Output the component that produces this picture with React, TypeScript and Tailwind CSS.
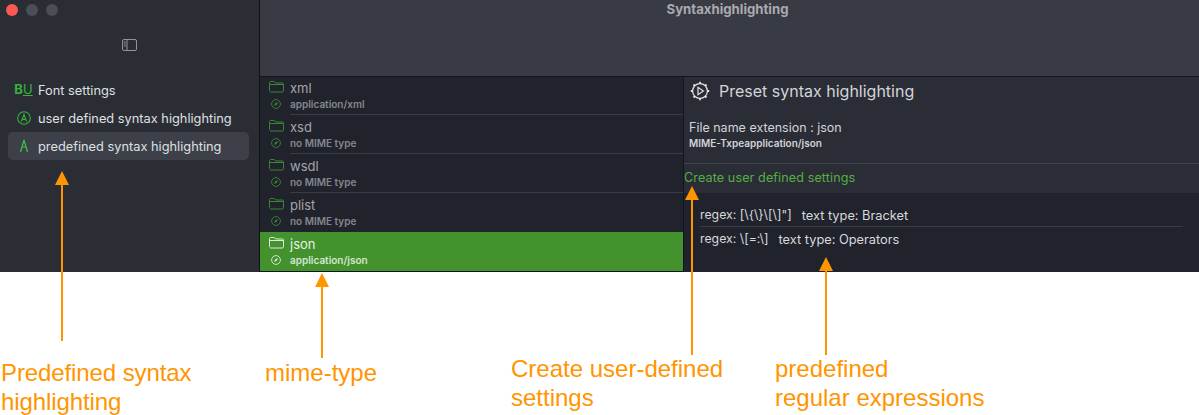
const sans = { fontFamily: 'Inter, sans-serif' };
const helvetica = { fontFamily: '"Liberation Sans", sans-serif' };

function FolderIcon({ className }: { className: string }) {
  return (
    <svg viewBox="0 0 15 12" className={className} fill="none" stroke="currentColor" strokeWidth="1">
      <path d="M.5 2V1.6C.5 1 1 .5 1.6.5h3.2c.5 0 .8.2 1.1.5l.9 1h6.6c.6 0 1.1.5 1.1 1.1v6.8c0 .6-.5 1.1-1.1 1.1H1.6C1 10.5.5 10 .5 9.4V2ZM.5 3.5h14" />
    </svg>
  );
}

function CompassIcon({ className }: { className: string }) {
  return (
    <svg viewBox="0 0 10 10" className={className} fill="none" stroke="currentColor" strokeWidth="0.9">
      <circle cx="5" cy="5" r="4.4" />
      <path d="M7 3 5.8 5.8 3 7 4.2 4.2Z" fill="currentColor" stroke="none" />
    </svg>
  );
}

function GearPlayIcon() {
  return (
    <svg viewBox="0 0 20 20" className="h-[20px] w-[20px] text-[#e4e5e8]" fill="none" stroke="currentColor" strokeWidth="1.2">
      <circle cx="10" cy="10" r="7.4" />
      <path d="M10 .8v2M10 17.2v2M.8 10h2M17.2 10h2M3.5 3.5l1.4 1.4M15.1 15.1l1.4 1.4M3.5 16.5l1.4-1.4M15.1 4.9l1.4-1.4" strokeWidth="1.8" />
      <path d="M8 6.3v7.4l5.4-3.7Z" />
    </svg>
  );
}

function SidebarToggleIcon() {
  return (
    <svg viewBox="0 0 15 12" className="h-[12px] w-[15px] text-[#92949a]" fill="none" stroke="currentColor" strokeWidth="1">
      <rect x=".5" y=".5" width="14" height="11" rx="1.5" />
      <path d="M5 .5v11" />
      <path d="M1.8 3h2M1.8 5h2M1.8 7h2" />
    </svg>
  );
}

function SidebarItem({ icon, label, selected }: { icon: React.ReactNode; label: string; selected?: boolean }) {
  return (
    <div className={`flex h-[28px] items-center rounded-[5px] ${selected ? 'bg-[#3d4049]' : ''}`}>
      <div className="flex w-[30px] shrink-0 justify-center pl-[1px]">{icon}</div>
      <span className="pt-[2px] text-[12.8px] text-[#dfe0e3]" style={sans}>{label}</span>
    </div>
  );
}

const files = [
  { name: 'xml', mime: 'application/xml' },
  { name: 'xsd', mime: 'no MIME type' },
  { name: 'wsdl', mime: 'no MIME type' },
  { name: 'plist', mime: 'no MIME type' },
  { name: 'json', mime: 'application/json', selected: true },
];

function FileRow({ name, mime, selected, last, first }: { name: string; mime: string; selected?: boolean; last?: boolean; first?: boolean }) {
  return (
    <div className={`relative ${first ? 'h-[38px]' : 'h-[39px]'} ${selected ? 'bg-[#43922e]' : ''}`}>
      <div className={`flex h-[22px] items-center ${first ? '-mt-[1px]' : ''}`}>
        <FolderIcon className={`ml-[9px] h-[12px] w-[15px] ${selected ? 'text-[#dcebd6]' : 'text-[#3d8434]'}`} />
        <span className={`ml-[6px] pt-[4px] text-[13px] ${selected ? 'text-[#e8f0e4]' : 'text-[#a3a5aa]'}`} style={sans}>{name}</span>
      </div>
      <div className="flex h-[12px] items-center">
        <CompassIcon className={`ml-[11px] h-[10px] w-[10px] ${selected ? 'text-[#dcebd6]' : 'text-[#3d8434]'}`} />
        <span className={`ml-[9px] text-[10px] font-semibold ${selected ? 'text-[#d5e6cf]' : 'text-[#85878d]'}`} style={sans}>{mime}</span>
      </div>
      {!selected && !last && <div className="absolute bottom-0 left-[30px] right-0 h-px bg-[#3a3c44]" />}
    </div>
  );
}

function Arrow({ x, top, bottom }: { x: string; top: string; bottom: string }) {
  return (
    <div className={`absolute flex flex-col items-center ${x} ${top} ${bottom}`}>
      <div className="h-0 w-0 border-x-[7px] border-b-[14px] border-x-transparent border-b-[#ff9500]" />
      <div className="w-[2px] flex-1 bg-[#ff9500]" />
    </div>
  );
}

export default function App() {
  return (
    <div className="relative h-[415px] w-[1199px] overflow-hidden bg-white">
      <div className="flex h-[272px] bg-[#2a2c35]">
        {/* sidebar */}
        <aside className="flex w-[259px] shrink-0 flex-col bg-[#2b2d34] pl-[8px] pr-[10px]">
          <div className="flex h-[20px] items-center gap-[8px]">
            <span className="-ml-[2px] h-[12px] w-[12px] rounded-full bg-[#fc5753]" />
            <span className="h-[12px] w-[12px] rounded-full bg-[#4c4e57]" />
            <span className="h-[12px] w-[12px] rounded-full bg-[#4c4e57]" />
          </div>
          <div className="flex h-[50px] items-center justify-center pl-[2px]">
            <SidebarToggleIcon />
          </div>
          <div className="flex flex-col pt-[6px]">
            <SidebarItem
              label="Font settings"
              icon={<span className="text-[13px] font-bold text-[#35b13e]" style={sans}>B<span className="font-normal underline">U</span></span>}
            />
            <SidebarItem
              label="user defined syntax highlighting"
              icon={
                <svg viewBox="0 0 14 14" className="h-[14px] w-[14px] text-[#35b13e]" fill="none" stroke="currentColor" strokeWidth="1.1">
                  <circle cx="7" cy="7" r="6.3" />
                  <path d="M4.5 10.5 7 3.5l2.5 7M5.2 8.5h3.6" />
                </svg>
              }
            />
            <SidebarItem
              selected
              label="predefined syntax highlighting"
              icon={
                <svg viewBox="0 0 10 14" className="h-[14px] w-[10px] text-[#3cc548]" fill="none" stroke="currentColor" strokeWidth="1.2">
                  <path d="M1.5 13 4 4.5 5 1.5l1 3L8.5 13M3 8h4" />
                </svg>
              }
            />
          </div>
        </aside>

        <div className="flex min-w-0 flex-1 flex-col border-l border-black/60">
          {/* title bar */}
          <header className="h-[77px] shrink-0 border-b border-[#14151a] bg-[#383b44] pr-[4px] text-center">
            <div className="text-[13.2px] font-bold leading-[18px] text-[#a8aab0]" style={sans}>Syntaxhighlighting</div>
          </header>

          <div className="flex min-h-0 flex-1">
            {/* file list */}
            <div className="flex w-[424px] shrink-0 flex-col border-r border-b border-[#14151a] bg-[#21232c]">
              {files.map((f, i) => (
                <FileRow key={f.name} name={f.name} mime={f.mime} selected={f.selected} first={i === 0} last={i === files.length - 2} />
              ))}
            </div>

            {/* detail */}
            <div className="flex min-w-0 flex-1 flex-col">
              <div className="bg-[#2a2d36]">
                <div className="flex h-[28px] items-center gap-[9px] pl-[6px]">
                  <GearPlayIcon />
                  <span className="text-[16px] text-[#d3d4d8]" style={sans}>Preset syntax highlighting</span>
                </div>
                <div className="pl-[5px] pt-[14px] text-[12.5px] leading-[18px] text-[#d3d4d8]" style={sans}>File name extension : json</div>
                <div className="pl-[5px] text-[10px] font-semibold leading-[12px] text-[#d3d4d8]" style={sans}>MIME-Txpeapplication/json</div>
                <div className="mt-[14px] h-px bg-[#42444c]" />
                <div className="flex h-[29px] items-center text-[12.6px] tracking-[0.1px] text-[#55b043]" style={sans}>Create user defined settings</div>
              </div>
              <div className="flex-1 bg-[#21232c] px-[16px] pt-[11px] text-[12.8px] text-[#d8d9dc]" style={sans}>
                <div className="flex h-[23px] items-center gap-[10px] border-b border-[#3a3c44] pt-[1px]">
                  <span className="text-[12.3px]">regex: [\{'{'}\{'}'}\[\]"]</span>
                  <span>text type: Bracket</span>
                </div>
                <div className="flex h-[24px] items-center gap-[10px] pt-[1px]">
                  <span className="text-[12.3px]">regex: \[=:\]</span>
                  <span>text type: Operators</span>
                </div>
              </div>
            </div>
          </div>
        </div>
      </div>

      {/* annotations */}
      <Arrow x="left-[55px]" top="top-[171px]" bottom="bottom-[74px]" />
      <Arrow x="left-[315px]" top="top-[273px]" bottom="bottom-[57px]" />
      <Arrow x="left-[685px]" top="top-[186px]" bottom="bottom-[60px]" />
      <Arrow x="left-[819px]" top="top-[257px]" bottom="bottom-[60px]" />
      <div className="absolute left-[1px] top-[358px] text-[24px] leading-[29px] tracking-[-0.1px] text-[#ff9500]" style={helvetica}>Predefined syntax<br />highlighting</div>
      <div className="absolute left-[265px] top-[358px] text-[24px] leading-[29px] text-[#ff9500]" style={helvetica}>mime-type</div>
      <div className="absolute left-[511px] top-[354px] text-[24px] leading-[29px] text-[#ff9500]" style={helvetica}>Create user-defined<br />settings</div>
      <div className="absolute left-[775px] top-[354px] text-[24px] leading-[29px] text-[#ff9500]" style={helvetica}>predefined<br />regular expressions</div>
    </div>
  );
}
